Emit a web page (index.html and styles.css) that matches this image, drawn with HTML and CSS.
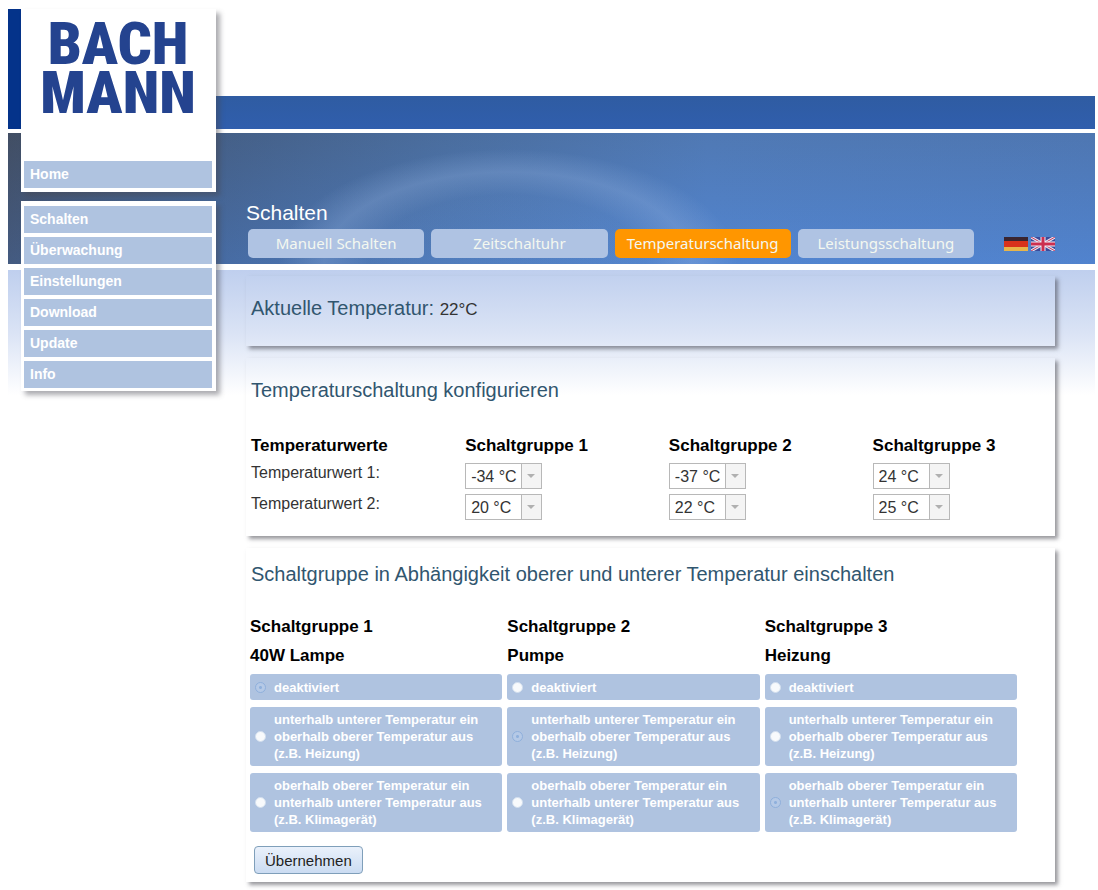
FILE: index.html
```
<!DOCTYPE html>
<html lang="de">
<head>
    <meta charset="utf-8">
    <title>Temperaturschaltung</title>
    <link rel="stylesheet" href="styles.css">
</head>
<body>
<div class="page">
    <div class="sidebar">
        <div class="side-box">
            <div class="logo"><span>BACH</span><span>MANN</span></div>
            <a href="#">Home</a>
        </div>
        <nav class="side-box menu">
            <a href="#">Schalten</a>
            <a href="#">Überwachung</a>
            <a href="#">Einstellungen</a>
            <a href="#">Download</a>
            <a href="#">Update</a>
            <a href="#">Info</a>
        </nav>
    </div>

    <main class="main">
        <h1>Schalten</h1>
        <div class="topbar">
            <nav class="tabs">
                <a href="#">Manuell Schalten</a>
                <a href="#">Zeitschaltuhr</a>
                <a href="#" class="active">Temperaturschaltung</a>
                <a href="#">Leistungsschaltung</a>
            </nav>
            <div class="flags">
                <a href="#" aria-label="Deutsch">
                    <svg width="24" height="14" viewBox="0 0 24 14">
                        <rect width="24" height="14" fill="#e8b54a"/>
                        <rect width="24" height="10" fill="#d8321c"/>
                        <rect width="24" height="4" fill="#3a2530"/>
                    </svg>
                </a>
                <a href="#" aria-label="English">
                    <svg width="24" height="14" viewBox="0 0 24 14">
                        <rect width="24" height="14" fill="#3c4a98"/>
                        <path d="M0 0L24 14M24 0L0 14" stroke="#e6e4f2" stroke-width="3"/>
                        <path d="M0 0L24 14M24 0L0 14" stroke="#c8375a" stroke-width="1"/>
                        <path d="M12 0V14M0 7H24" stroke="#f0eef8" stroke-width="5"/>
                        <path d="M12 0V14M0 7H24" stroke="#cc2f50" stroke-width="3"/>
                    </svg>
                </a>
            </div>
        </div>

        <section class="panel current">
            <h2>Aktuelle Temperatur: <span>22°C</span></h2>
        </section>

        <section class="panel config">
            <h2>Temperaturschaltung konfigurieren</h2>
            <table>
                <tr>
                    <th>Temperaturwerte</th>
                    <th>Schaltgruppe 1</th>
                    <th>Schaltgruppe 2</th>
                    <th>Schaltgruppe 3</th>
                </tr>
                <tr>
                    <td>Temperaturwert 1:</td>
                    <td><select aria-label="Temperaturwert 1, Schaltgruppe 1"><option>-34 °C</option></select></td>
                    <td><select aria-label="Temperaturwert 1, Schaltgruppe 2"><option>-37 °C</option></select></td>
                    <td><select aria-label="Temperaturwert 1, Schaltgruppe 3"><option>24 °C</option></select></td>
                </tr>
                <tr>
                    <td>Temperaturwert 2:</td>
                    <td><select aria-label="Temperaturwert 2, Schaltgruppe 1"><option>20 °C</option></select></td>
                    <td><select aria-label="Temperaturwert 2, Schaltgruppe 2"><option>22 °C</option></select></td>
                    <td><select aria-label="Temperaturwert 2, Schaltgruppe 3"><option>25 °C</option></select></td>
                </tr>
            </table>
        </section>

        <section class="panel switch">
            <h2>Schaltgruppe in Abhängigkeit oberer und unterer Temperatur einschalten</h2>
            <form>
                <div class="groups">
                    <div class="group">
                        <h3>Schaltgruppe 1</h3>
                        <h3>40W Lampe</h3>
                        <label><input type="radio" name="g1" checked><span>deaktiviert</span></label>
                        <label><input type="radio" name="g1"><span>unterhalb unterer Temperatur ein<br>oberhalb oberer Temperatur aus<br>(z.B. Heizung)</span></label>
                        <label><input type="radio" name="g1"><span>oberhalb oberer Temperatur ein<br>unterhalb unterer Temperatur aus<br>(z.B. Klimagerät)</span></label>
                    </div>
                    <div class="group">
                        <h3>Schaltgruppe 2</h3>
                        <h3>Pumpe</h3>
                        <label><input type="radio" name="g2"><span>deaktiviert</span></label>
                        <label><input type="radio" name="g2" checked><span>unterhalb unterer Temperatur ein<br>oberhalb oberer Temperatur aus<br>(z.B. Heizung)</span></label>
                        <label><input type="radio" name="g2"><span>oberhalb oberer Temperatur ein<br>unterhalb unterer Temperatur aus<br>(z.B. Klimagerät)</span></label>
                    </div>
                    <div class="group">
                        <h3>Schaltgruppe 3</h3>
                        <h3>Heizung</h3>
                        <label><input type="radio" name="g3"><span>deaktiviert</span></label>
                        <label><input type="radio" name="g3"><span>unterhalb unterer Temperatur ein<br>oberhalb oberer Temperatur aus<br>(z.B. Heizung)</span></label>
                        <label><input type="radio" name="g3" checked><span>oberhalb oberer Temperatur ein<br>unterhalb unterer Temperatur aus<br>(z.B. Klimagerät)</span></label>
                    </div>
                </div>
                <button type="button">Übernehmen</button>
            </form>
        </section>
    </main>
</div>
</body>
</html>
```

FILE: styles.css
```
* {
    box-sizing: border-box;
}
body {
    margin: 0;
    padding: 9px 3px 0 8px;
    background: #fff;
    font-family: "Liberation Sans", Arial, sans-serif;
}
h1, h2, h3 {
    margin: 0;
}
a {
    text-decoration: none;
}

/* blue bands behind sidebar and content */
.page {
    display: flex;
    padding-left: 13px;
    background:
        linear-gradient(#04338a, #04338a) 0 0 / 13px 120px no-repeat,
        linear-gradient(#2f5ca2, #305ead) 0 87px / 100% 33px no-repeat,
        radial-gradient(ellipse 230px 115px at 46% 131px, rgba(150, 180, 225, 0.05) 60%, rgba(150, 180, 225, 0.3) 80%, transparent) 0 124px / 100% 131px no-repeat,
        linear-gradient(rgba(70, 90, 110, 0.25), rgba(80, 140, 225, 0.25)) 0 124px / 100% 131px no-repeat,
        linear-gradient(90deg, #404a60 0, #44618f 210px, #4c74ae 440px, #5383cb 700px, #5180c8 100%) 0 124px / 100% 131px no-repeat,
        linear-gradient(#bfcfee, #dae3f5 50%, #fff) 0 261px / 100% 125px no-repeat;
}

.sidebar {
    width: 195px;
    flex-shrink: 0;
}
.side-box {
    display: flex;
    flex-direction: column;
    gap: 4px;
    padding: 0 4px 4px 3px;
    background: #fff;
    box-shadow: 4px 4px 5px rgba(70, 70, 80, 0.45);
}
.menu {
    margin-top: 9px;
    padding-top: 5px;
    padding-bottom: 3px;
}
.side-box a {
    padding-left: 6px;
    background: #afc3e0;
    color: #fff;
    font-size: 14px;
    font-weight: bold;
    line-height: 27px;
}
.logo {
    display: flex;
    flex-direction: column;
    align-items: center;
    height: 148px;
    padding-top: 10px;
    color: #24438f;
    font-family: "Roboto Condensed", Roboto, "Liberation Sans", sans-serif;
    font-size: 60px;
    font-weight: 900;
    line-height: 49px;
}

.main {
    flex: 1;
    padding: 191px 40px 8px 30px;
}
h1 {
    color: #fff;
    font-size: 21px;
    font-weight: normal;
    line-height: 26px;
}
.topbar {
    display: flex;
    align-items: center;
    gap: 30px;
    margin: 3px 0 18px 2px;
}
.tabs {
    flex: 1;
    display: grid;
    grid-template-columns: repeat(4, 1fr);
    gap: 7px;
}
.tabs a {
    border-radius: 5px;
    background: #afc3e3;
    color: #f4f8f0;
    font-family: "Noto Sans", sans-serif;
    font-size: 15px;
    line-height: 29px;
    text-align: center;
}
.tabs .active {
    background: #ff9600;
}
.flags {
    display: flex;
    gap: 3px;
}
.flags svg {
    display: block;
}

.panel {
    margin-bottom: 12px;
    padding: 0 5px;
    box-shadow: 3px 3px 4px rgba(50, 50, 60, 0.5);
}
h2 {
    color: #31566f;
    font-size: 20px;
    font-weight: normal;
    line-height: 24px;
}
h2 span {
    color: #333;
    font-size: 17px;
}
.current {
    padding-top: 20px;
    padding-bottom: 24px;
}
.config {
    padding-top: 20px;
    padding-bottom: 12px;
}
.config table {
    width: 100%;
    margin-top: 30px;
    border-collapse: collapse;
    table-layout: fixed;
}
th {
    width: 25.5%;
    padding: 0 0 2px;
    font-size: 17px;
    line-height: 28px;
    text-align: left;
}
th:first-child {
    width: 26.8%;
}
th:last-child {
    width: auto;
}
td {
    height: 31px;
    padding: 0;
    color: #333;
    font-size: 16px;
    line-height: 22px;
    vertical-align: top;
}
select {
    display: block;
    appearance: none;
    width: 77px;
    height: 26px;
    margin-top: 1px;
    padding: 0 0 0 5px;
    border: 1px solid #b8b8b8;
    border-radius: 0;
    background:
        url("data:image/svg+xml,%3Csvg xmlns='http://www.w3.org/2000/svg' width='20' height='24'%3E%3Crect width='20' height='24' fill='%23f4f4f4'/%3E%3Cpath d='M0 0V24' stroke='%23b8b8b8' stroke-width='2'/%3E%3Cpath d='M6 10H14L10 14Z' fill='%23b0b0b0'/%3E%3C/svg%3E") right center no-repeat,
        #fff;
    color: #333;
    font-family: inherit;
    font-size: 16px;
}

.switch {
    margin-bottom: 0;
    padding-top: 14px;
    padding-bottom: 8px;
}
.groups {
    display: grid;
    grid-template-columns: repeat(3, 1fr);
    gap: 5px;
    margin: 30px 33px 14px -1px;
}
.group {
    display: flex;
    flex-direction: column;
    gap: 7px;
}
h3 {
    font-size: 17px;
    line-height: 22px;
}
label {
    display: flex;
    align-items: center;
    gap: 8px;
    min-height: 26px;
    padding: 4px 5px;
    border-radius: 3px;
    background: #afc3e0;
    color: #fff;
    font-size: 13px;
    font-weight: bold;
    line-height: 17px;
}
input[type="radio"] {
    appearance: none;
    flex-shrink: 0;
    width: 11px;
    height: 11px;
    margin: 0;
    border: 1px solid #d3dfee;
    border-radius: 50%;
    background: #f8fafc;
}
input[type="radio"]:checked {
    border-color: #8fb0dc;
    background: radial-gradient(#8fb0dc 1px, #b5c9e6 2px);
}
button {
    display: block;
    height: 28px;
    margin-left: 3px;
    padding: 0 10px;
    border: 1px solid #7f9fba;
    border-radius: 4px;
    background: linear-gradient(#eaf1fb, #cbdcf2);
    color: #222;
    font-family: inherit;
    font-size: 15px;
}
```
